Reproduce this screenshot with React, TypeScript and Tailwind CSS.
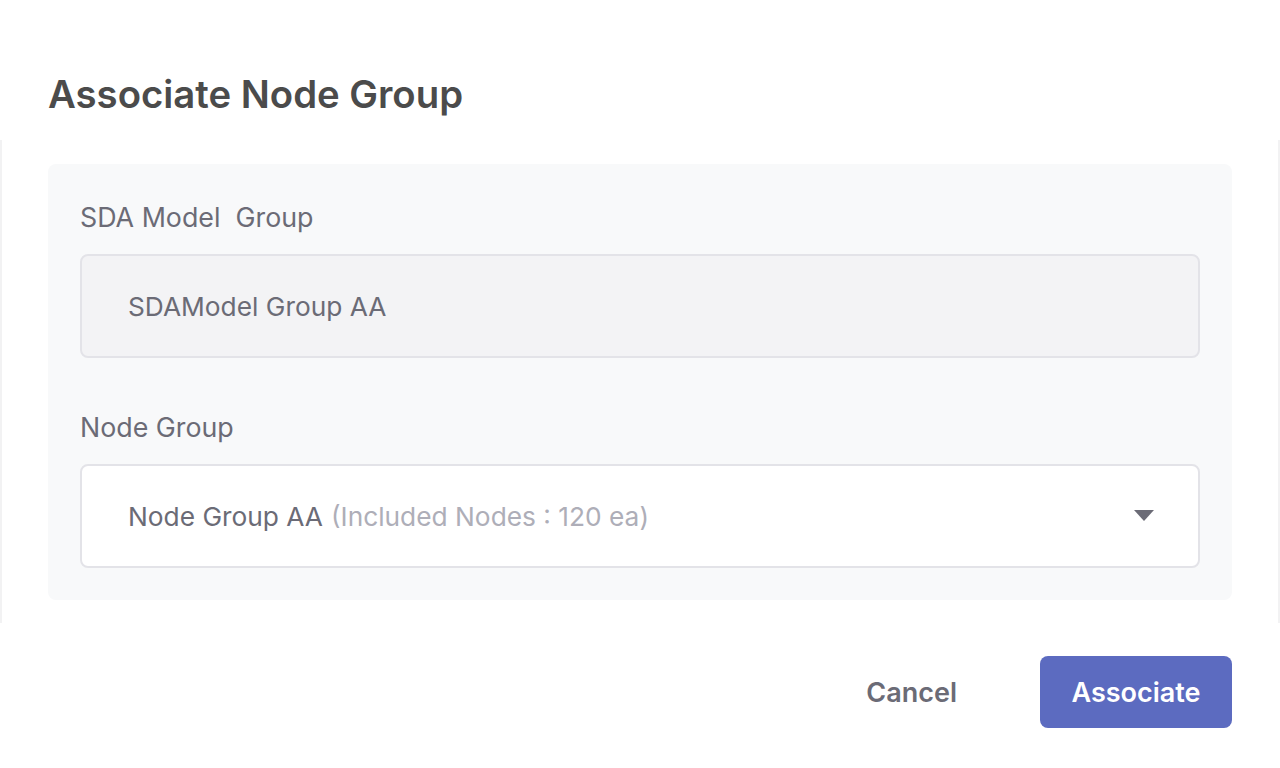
import React from "react";

export default function App() {
  return (
    <div
      className="w-[1280px] h-[768px] bg-white flex flex-col overflow-hidden"
      style={{ fontFamily: "Inter, 'Noto Sans', sans-serif" }}
    >
      <div className="h-[140px] shrink-0 flex items-end px-[48px] pb-[22px]">
        <h1 className="text-[38.3px] leading-[48px] font-semibold text-[#4b4b4b]">
          Associate Node Group
        </h1>
      </div>
      <div className="h-[483px] shrink-0 border-x-2 border-[#f2f2f3] px-[46px] pt-[24px]">
        <div className="bg-[#f8f9fa] rounded-[8px] px-[32px] pt-[35px] pb-[32px] flex flex-col">
          <label className="text-[26.8px] leading-[36px] text-[#6b6b76]">SDA Model&nbsp; Group</label>
          <div className="mt-[19px] h-[104px] rounded-[8px] border-2 border-[#e3e3e8] bg-[#f3f3f5] flex items-center px-[46px] pt-[2px] text-[26.3px] text-[#6b6b76]">
            SDAModel Group AA
          </div>
          <label className="mt-[51px] text-[26.8px] leading-[36px] text-[#6b6b76]">Node Group</label>
          <div className="mt-[19px] h-[104px] rounded-[8px] border-2 border-[#e3e3e8] bg-white flex items-center pl-[46px] pr-[44px] text-[26.3px]">
            <span className="text-[#6b6b76] pt-[2px]">Node Group AA</span>
            <span className="ml-[8px] pt-[2px] text-[#aeaeb8]">(Included Nodes : 120 ea)</span>
            <svg className="ml-auto" width="20" height="12" viewBox="0 0 20 12">
              <path d="M0 0 L20 0 L10 11 Z" fill="#6b6b76" />
            </svg>
          </div>
        </div>
      </div>
      <div className="flex-1 flex items-start justify-end px-[48px] pt-[33px] gap-[43px]">
        <button className="h-[72px] pt-[3px] px-[40px] text-[27px] font-semibold text-[#6b6b76]">Cancel</button>
        <button className="h-[72px] pt-[3px] w-[192px] rounded-[8px] bg-[#5c6bc0] text-[27px] font-semibold text-white">
          Associate
        </button>
      </div>
    </div>
  );
}
